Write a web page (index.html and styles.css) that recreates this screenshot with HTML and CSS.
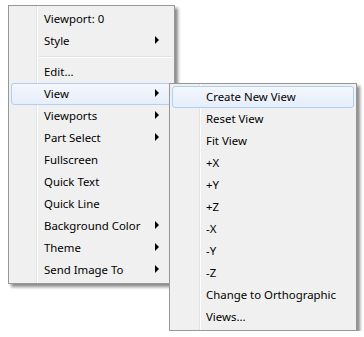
FILE: index.html
```html
<!DOCTYPE html>
<html lang="en">
<head>
    <meta charset="UTF-8">
    <title>Context Menu</title>
    <link rel="stylesheet" href="styles.css">
</head>
<body>
    <div class="menus">
        <div class="menu main">
            <div class="item">Viewport: 0</div>
            <div class="item">Style <span class="arrow"></span></div>
            <div class="separator"></div>
            <div class="item">Edit...</div>
            <div class="item active">View <span class="arrow"></span></div>
            <div class="item">Viewports <span class="arrow"></span></div>
            <div class="item">Part Select <span class="arrow"></span></div>
            <div class="item">Fullscreen</div>
            <div class="item">Quick Text</div>
            <div class="item">Quick Line</div>
            <div class="item">Background Color <span class="arrow"></span></div>
            <div class="item">Theme <span class="arrow"></span></div>
            <div class="item">Send Image To <span class="arrow"></span></div>
        </div>

        <div class="menu submenu">
            <div class="item active">Create New View</div>
            <div class="item">Reset View</div>
            <div class="item">Fit View</div>
            <div class="item">+X</div>
            <div class="item">+Y</div>
            <div class="item">+Z</div>
            <div class="item">-X</div>
            <div class="item">-Y</div>
            <div class="item">-Z</div>
            <div class="item">Change to Orthographic</div>
            <div class="item">Views...</div>
        </div>
    </div>
</body>
</html>
```

FILE: styles.css
```css
body {
    margin: 0;
    padding: 5px 0 0 8px;
    background: #ffffff;
    color: #000000;
    font-family: "Segoe UI", "Noto Sans", sans-serif;
    font-size: 11.4px;
}

.menus {
    display: flex;
    align-items: flex-start;
}

.menu {
    position: relative;
    flex: none;
    box-sizing: border-box;
    border: 1px solid #979797;
    background: #f0f0f0;
    padding: 2px;
    box-shadow: 3px 3px 3px rgba(0, 0, 0, 0.45);
}

/* icon gutter line */
.menu::before {
    content: "";
    position: absolute;
    top: 0;
    bottom: 0;
    left: 27px;
    width: 1px;
    background: #e2e3e3;
    border-right: 1px solid #ffffff;
}

.main {
    width: 167px;
}

.item {
    position: relative;
    height: 22px;
    box-sizing: border-box;
    display: flex;
    align-items: center;
    padding-left: 32px;
    padding-bottom: 2px;
    border: 1px solid transparent;
    border-radius: 3px;
    white-space: nowrap;
}

.item.active {
    border-color: #b0cff4;
    background: linear-gradient(#f3f7fd, #e6eefa);
}

.arrow {
    margin-left: auto;
    margin-right: 12px;
    width: 0;
    height: 0;
    border-left: 4px solid #000000;
    border-top: 4px solid transparent;
    border-bottom: 4px solid transparent;
}

.separator {
    height: 9px;
    margin-left: 28px;
    display: flex;
    align-items: center;
}

.separator::after {
    content: "";
    flex: 1;
    height: 1px;
    background: #e0e0e0;
    border-bottom: 1px solid #ffffff;
}

.submenu {
    width: 188px;
    margin-left: -6px;
    margin-top: 78px;
}

.submenu::before {
    left: 29px;
}

.submenu .item {
    padding-left: 33px;
}
```
